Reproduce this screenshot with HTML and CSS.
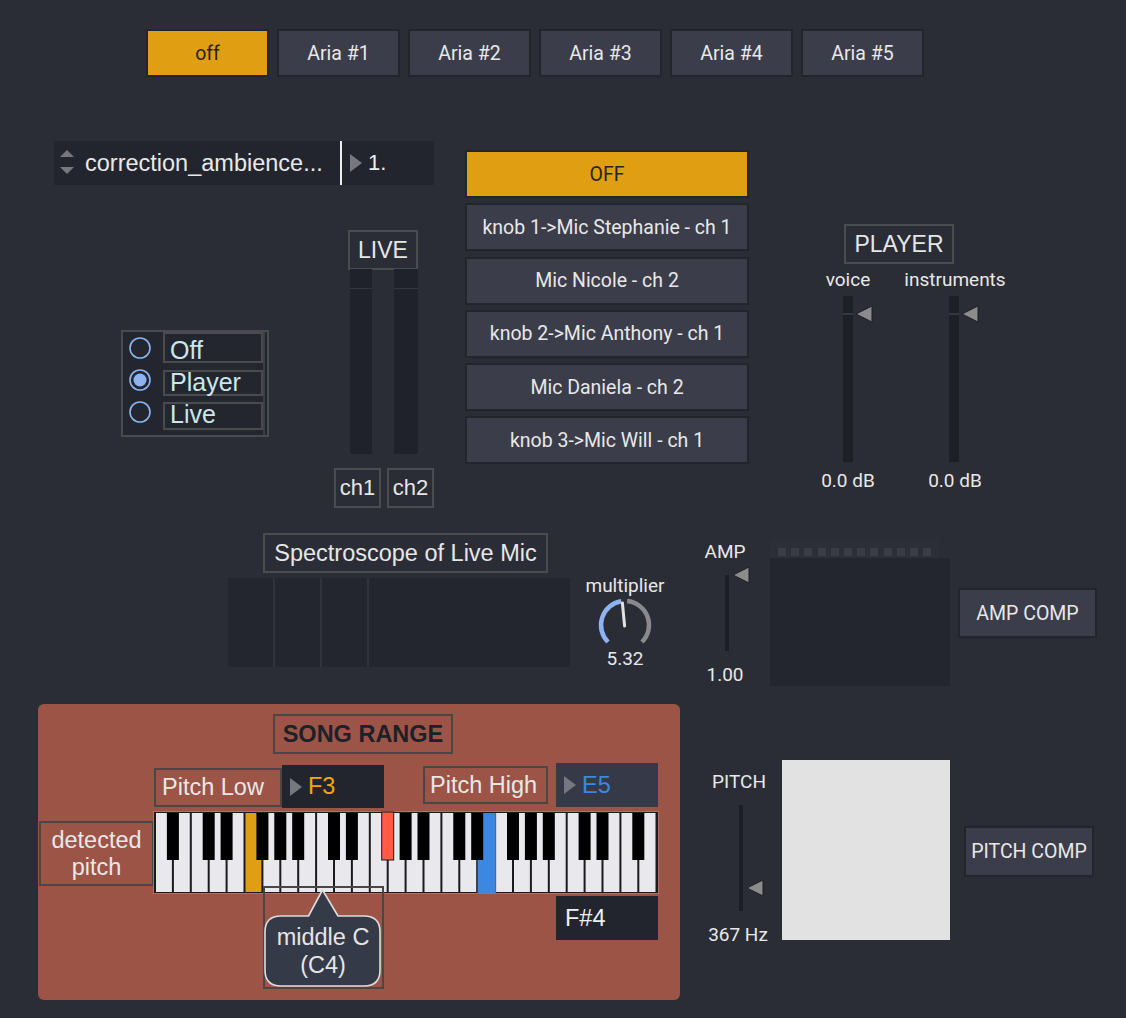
FILE: index.html
```html
<!DOCTYPE html>
<html>
<head>
<meta charset="utf-8">
<link rel="stylesheet" href="styles.css">
</head>
<body>
<div class="canvas">

  <div class="tabs">
    <div class="tab on">off</div>
    <div class="tab">Aria #1</div>
    <div class="tab">Aria #2</div>
    <div class="tab">Aria #3</div>
    <div class="tab">Aria #4</div>
    <div class="tab">Aria #5</div>
  </div>

  <div class="umenu">
    <svg class="updown" width="16" height="30" viewBox="0 0 16 30">
      <polygon points="1,9 8,2 15,9" fill="#77787d"/>
      <polygon points="1,19 15,19 8,26" fill="#77787d"/>
    </svg>
    <span class="umenu-text">correction_ambience...</span>
    <div class="numbox">
      <svg width="12" height="18" viewBox="0 0 12 18"><polygon points="0,0 12,9 0,18" fill="#77787d"/></svg>
      <span>1.</span>
    </div>
  </div>

  <div class="radio">
    <div class="radio-dots">
      <svg width="40" height="32"><circle cx="17" cy="16" r="10" fill="none" stroke="#8db4f0" stroke-width="1.6"/></svg>
      <svg width="40" height="32"><circle cx="17" cy="16" r="10" fill="none" stroke="#8db4f0" stroke-width="1.6"/><circle cx="17" cy="16" r="6.5" fill="#8db4f0"/></svg>
      <svg width="40" height="32"><circle cx="17" cy="16" r="10" fill="none" stroke="#8db4f0" stroke-width="1.6"/></svg>
    </div>
    <div class="radio-labels">
      <div class="rl rl-off"><span>Off</span></div>
      <div class="rl rl-player"><span>Player</span></div>
      <div class="rl rl-live"><span>Live</span></div>
    </div>
  </div>

  <div class="cmt live-title">LIVE</div>
  <div class="meter meter-l"></div>
  <div class="meter meter-r"></div>
  <div class="cmt ch ch1">ch1</div>
  <div class="cmt ch ch2">ch2</div>

  <div class="btnlist">
    <div class="btn on">OFF</div>
    <div class="btn">knob 1-&gt;Mic Stephanie - ch 1</div>
    <div class="btn">Mic Nicole - ch 2</div>
    <div class="btn">knob 2-&gt;Mic Anthony - ch 1</div>
    <div class="btn">Mic Daniela - ch 2</div>
    <div class="btn">knob 3-&gt;Mic Will - ch 1</div>
  </div>

  <div class="cmt player-title">PLAYER</div>
  <div class="lbl voice-lbl">voice</div>
  <div class="lbl instr-lbl">instruments</div>
  <div class="vslider vs-voice">
    <div class="vtrack"></div>
    <svg class="vthumb" width="20" height="20" viewBox="0 0 20 20"><polygon points="18,2 2,10 18,18" fill="#8c8c8c" stroke="#1c1e24" stroke-width="1"/></svg>
  </div>
  <div class="vslider vs-instr">
    <div class="vtrack"></div>
    <svg class="vthumb" width="20" height="20" viewBox="0 0 20 20"><polygon points="18,2 2,10 18,18" fill="#8c8c8c" stroke="#1c1e24" stroke-width="1"/></svg>
  </div>
  <div class="lbl db-voice">0.0 dB</div>
  <div class="lbl db-instr">0.0 dB</div>

  <div class="cmt spec-title">Spectroscope of Live Mic</div>
  <div class="spectro">
    <div class="sp-col"></div>
    <div class="sp-col"></div>
    <div class="sp-col"></div>
    <div class="sp-rest"></div>
  </div>
  <div class="lbl mult-lbl">multiplier</div>
  <svg class="knob" width="56" height="56" viewBox="0 0 56 56">
    <path d="M 11.03 44.97 A 24 24 0 0 1 24.25 4.3" fill="none" stroke="#8db4f0" stroke-width="4.5"/>
    <path d="M 30.1 4.1 A 24 24 0 0 1 44.97 44.97" fill="none" stroke="#8a8a8c" stroke-width="4.5"/>
    <line x1="27.6" y1="29" x2="25.4" y2="6" stroke="#e2e2e2" stroke-width="3" stroke-linecap="round"/>
  </svg>
  <div class="lbl mult-val">5.32</div>

  <div class="lbl amp-lbl">AMP</div>
  <div class="thin-track amp-track"></div>
  <svg class="amp-thumb" width="20" height="20" viewBox="0 0 20 20"><polygon points="18,2 2,10 18,18" fill="#8c8c8c" stroke="#1c1e24" stroke-width="1"/></svg>
  <div class="lbl amp-val">1.00</div>
  <div class="ampmeter-top">
    <i></i><i></i><i></i><i></i><i></i><i></i><i></i><i></i><i></i><i></i><i></i><i></i>
  </div>
  <div class="ampmeter"></div>
  <div class="btn comp amp-comp">AMP COMP</div>

  <div class="panel">
    <div class="pcmt song-title">SONG RANGE</div>
    <div class="pcmt plow">Pitch Low</div>
    <div class="notebox f3">
      <svg width="12" height="18" viewBox="0 0 12 18"><polygon points="0,0 12,9 0,18" fill="#77787d"/></svg>
      <span>F3</span>
    </div>
    <div class="pcmt phigh">Pitch High</div>
    <div class="notebox e5">
      <svg width="12" height="18" viewBox="0 0 12 18"><polygon points="0,0 12,9 0,18" fill="#77787d"/></svg>
      <span>E5</span>
    </div>
    <div class="pcmt detected">detected<br>pitch</div>

    <svg class="keyboard" width="506" height="84" viewBox="0 0 506 84">
      <rect x="0" y="0" width="506" height="83" fill="#1b1b1d"/>
      <rect x="0.5" y="0.5" width="505" height="82" fill="none" stroke="#b4705f" stroke-width="1"/>
      <g fill="#e8e8ed">
        <rect x="3" y="2" width="15.9" height="79"/>
        <rect x="20.9" y="2" width="15.9" height="79"/>
        <rect x="38.8" y="2" width="15.9" height="79"/>
        <rect x="56.7" y="2" width="15.9" height="79"/>
        <rect x="74.6" y="2" width="15.9" height="79"/>
        <rect x="92.5" y="2" width="15.9" height="79" fill="#e09e12"/>
        <rect x="110.4" y="2" width="15.9" height="79"/>
        <rect x="128.3" y="2" width="15.9" height="79"/>
        <rect x="146.2" y="2" width="15.9" height="79"/>
        <rect x="164.1" y="2" width="15.9" height="79"/>
        <rect x="182" y="2" width="15.9" height="79"/>
        <rect x="199.9" y="2" width="15.9" height="79"/>
        <rect x="217.8" y="2" width="15.9" height="79"/>
        <rect x="235.7" y="2" width="15.9" height="79"/>
        <rect x="253.6" y="2" width="15.9" height="79"/>
        <rect x="271.5" y="2" width="15.9" height="79"/>
        <rect x="289.4" y="2" width="15.9" height="79"/>
        <rect x="307.3" y="2" width="15.9" height="79"/>
        <rect x="324.6" y="2" width="18.2" height="80.5" fill="#3c87e0"/>
        <rect x="343.1" y="2" width="15.9" height="79"/>
        <rect x="361" y="2" width="15.9" height="79"/>
        <rect x="378.9" y="2" width="15.9" height="79"/>
        <rect x="396.8" y="2" width="15.9" height="79"/>
        <rect x="414.7" y="2" width="15.9" height="79"/>
        <rect x="432.6" y="2" width="15.9" height="79"/>
        <rect x="450.5" y="2" width="15.9" height="79"/>
        <rect x="468.4" y="2" width="15.9" height="79"/>
        <rect x="486.3" y="2" width="16.2" height="79"/>
      </g>
      <g fill="#000">
        <rect x="13.9" y="2" width="12" height="47"/>
        <rect x="49.7" y="2" width="12" height="47"/>
        <rect x="67.6" y="2" width="12" height="47"/>
        <rect x="103.4" y="2" width="12" height="47"/>
        <rect x="121.3" y="2" width="12" height="47"/>
        <rect x="139.2" y="2" width="12" height="47"/>
        <rect x="175" y="2" width="12" height="47"/>
        <rect x="192.9" y="2" width="12" height="47"/>
        <rect x="228.7" y="1" width="12" height="48" fill="#ff5b45" stroke="#1b1b1d" stroke-width="1"/>
        <rect x="246.6" y="2" width="12" height="47"/>
        <rect x="264.5" y="2" width="12" height="47"/>
        <rect x="300.3" y="2" width="12" height="47"/>
        <rect x="318.2" y="2" width="12" height="47"/>
        <rect x="354" y="2" width="12" height="47"/>
        <rect x="371.9" y="2" width="12" height="47"/>
        <rect x="389.8" y="2" width="12" height="47"/>
        <rect x="425.6" y="2" width="12" height="47"/>
        <rect x="443.5" y="2" width="12" height="47"/>
        <rect x="479.3" y="2" width="12" height="47"/>
      </g>
    </svg>

    <div class="callout">
      <svg class="bubble" width="120" height="102" viewBox="0 0 120 102">
        <path d="M 18 30 L 45.5 30 L 59.5 4 L 75 30 L 101 30 Q 117 30 117 46 L 117 84 Q 117 100 101 100 L 18 100 Q 2 100 2 84 L 2 46 Q 2 30 18 30 Z" fill="#353a48" stroke="#dcdcdc" stroke-width="1.6" stroke-linejoin="round"/>
      </svg>
      <div class="bubble-text">middle C<br>(C4)</div>
    </div>

    <div class="notebox fs4"><span>F#4</span></div>
  </div>

  <div class="lbl pitch-lbl">PITCH</div>
  <div class="thin-track pitch-track"></div>
  <svg class="pitch-thumb" width="20" height="20" viewBox="0 0 20 20"><polygon points="18,2 2,10 18,18" fill="#8c8c8c" stroke="#1c1e24" stroke-width="1"/></svg>
  <div class="lbl pitch-val">367 Hz</div>
  <div class="pitchbox"></div>
  <div class="btn comp pitch-comp">PITCH COMP</div>

</div>
</body>
</html>
```

FILE: styles.css
```css
html, body {
  margin: 0;
  padding: 0;
  background: #2b2d36;
}

.canvas {
  position: relative;
  width: 1126px;
  height: 1018px;
  overflow: hidden;
  background: #2b2d36;
  font-family: "Liberation Sans", Arial, sans-serif;
  color: #e6e6e6;
}

.canvas > * {
  position: absolute;
  box-sizing: border-box;
}

/* ---------- tabs ---------- */
.tabs {
  left: 146px;
  top: 29px;
  display: flex;
  gap: 8px;
}
.tab {
  width: 123px;
  height: 48px;
  box-sizing: border-box;
  border: 2px solid #23252d;
  background: #3b3d4a;
  color: #e8e8e8;
  font-family: Roboto, "Liberation Sans", sans-serif;
  font-size: 19.5px;
  display: flex;
  align-items: center;
  justify-content: center;
}
.tab.on {
  background: #e09e12;
  color: #26241f;
}

/* ---------- umenu ---------- */
.umenu {
  left: 54px;
  top: 141px;
  width: 380px;
  height: 44px;
  background: #22252e;
  display: flex;
  align-items: center;
}
.updown {
  margin-left: 5px;
  flex: none;
}
.umenu-text {
  margin-left: 10px;
  width: 255px;
  flex: none;
  font-size: 23.5px;
  color: #e8e8e8;
  white-space: nowrap;
}
.numbox {
  align-self: stretch;
  border-left: 2px solid #ececec;
  display: flex;
  align-items: center;
  gap: 6px;
  padding-left: 8px;
  font-size: 22px;
  color: #ececec;
}

/* ---------- radio ---------- */
.radio {
  left: 121px;
  top: 330px;
  width: 148px;
  height: 107px;
  border: 2px solid #4a4b50;
  background: #23262f;
  display: flex;
}
.radio-dots {
  width: 40px;
  display: flex;
  flex-direction: column;
}
.radio-dots svg {
  display: block;
}
.radio-labels {
  width: 100px;
  display: flex;
  flex-direction: column;
  border-right: 2px solid #3e3f44;
}
.rl {
  box-sizing: border-box;
  border: 2px solid #4b4b4e;
  padding-left: 5px;
  font-size: 25px;
  line-height: 25px;
  color: #cbe6ec;
  overflow: visible;
  white-space: nowrap;
}
.rl span {
  display: block;
}
.rl-off {
  height: 31px;
}
.rl-off span {
  margin-top: 4px;
}
.rl-player {
  height: 26px;
  margin-top: 7px;
}
.rl-player span {
  margin-top: -2px;
}
.rl-live {
  height: 28px;
  margin-top: 6px;
}
.rl-live span {
  margin-top: -2px;
}

/* ---------- comments with border ---------- */
.cmt {
  border: 2px solid #4b4c50;
  font-size: 23px;
  color: #e6e6e6;
  display: flex;
  align-items: center;
  justify-content: center;
  white-space: nowrap;
}
.live-title {
  left: 348px;
  top: 230px;
  width: 70px;
  height: 40px;
}
.meter {
  top: 269px;
  height: 185px;
  background: #1f222a;
  border-top: 19px solid #1f222a;
  box-shadow: inset 0 1px 0 #343740;
}
.meter-l {
  left: 350px;
  width: 22px;
}
.meter-r {
  left: 394px;
  width: 24px;
}
.ch {
  top: 468px;
  width: 47px;
  height: 40px;
  font-size: 22px;
}
.ch1 {
  left: 334px;
}
.ch2 {
  left: 387px;
}

/* ---------- buttons ---------- */
.btnlist {
  left: 465px;
  top: 150px;
  width: 284px;
  display: flex;
  flex-direction: column;
  gap: 5.25px;
}
.btn {
  height: 48px;
  box-sizing: border-box;
  border: 2px solid #23252d;
  background: #3b3d4a;
  color: #e8e8e8;
  font-family: Roboto, "Liberation Sans", sans-serif;
  font-size: 19.5px;
  display: flex;
  align-items: center;
  justify-content: center;
  white-space: nowrap;
}
.btn.on {
  background: #e09e12;
  color: #26241f;
}

/* ---------- player ---------- */
.player-title {
  left: 844px;
  top: 224px;
  width: 110px;
  height: 40px;
}
.lbl {
  font-family: Roboto, "Liberation Sans", sans-serif;
  font-size: 19px;
  color: #e8e8e8;
  white-space: nowrap;
  text-align: center;
  line-height: 22px;
}
.voice-lbl {
  left: 808px;
  width: 80px;
  top: 269px;
}
.instr-lbl {
  left: 895px;
  width: 120px;
  top: 269px;
}
.vslider {
  top: 296px;
  width: 32px;
  height: 166px;
}
.vs-voice {
  left: 843px;
}
.vs-instr {
  left: 949px;
}
.vtrack {
  position: absolute;
  left: 0;
  top: 0;
  width: 10px;
  height: 166px;
  background: #1e2028;
}
.vtrack::after {
  content: "";
  position: absolute;
  left: 0;
  top: 17px;
  width: 10px;
  height: 2px;
  background: #363944;
}
.vthumb {
  position: absolute;
  left: 11px;
  top: 8px;
}
.db-voice {
  left: 808px;
  width: 80px;
  top: 470px;
}
.db-instr {
  left: 915px;
  width: 80px;
  top: 470px;
}

/* ---------- spectroscope ---------- */
.spec-title {
  left: 263px;
  top: 533px;
  width: 285px;
  height: 40px;
  font-size: 23.5px;
}
.spectro {
  left: 228px;
  top: 578px;
  width: 342px;
  height: 89px;
  display: flex;
  background: #23262f;
}
.sp-col {
  width: 45px;
  border-right: 2px solid #30333c;
}
.sp-rest {
  flex: 1;
}
.mult-lbl {
  left: 575px;
  width: 100px;
  top: 575px;
}
.knob {
  left: 597px;
  top: 597px;
}
.mult-val {
  left: 585px;
  width: 80px;
  top: 648px;
}

/* ---------- amp ---------- */
.amp-lbl {
  left: 700px;
  width: 50px;
  top: 541px;
}
.thin-track {
  width: 4px;
  background: #1c1e26;
}
.amp-track {
  left: 725px;
  top: 575px;
  height: 76px;
}
.amp-thumb {
  left: 731px;
  top: 565px;
}
.amp-val {
  left: 700px;
  width: 50px;
  top: 664px;
}
.ampmeter-top {
  left: 770px;
  top: 540px;
  width: 168px;
  height: 20px;
  background: #2d2f38;
  display: flex;
  gap: 5.2px;
  padding: 8px 0 0 8px;
}
.ampmeter-top i {
  display: block;
  width: 8px;
  height: 8px;
  background: #3a3c46;
}
.ampmeter {
  left: 770px;
  top: 558px;
  width: 180px;
  height: 128px;
  background: #23262f;
}
.amp-comp {
  left: 958px;
  top: 588px;
  width: 139px;
  height: 50px;
}

/* ---------- song range panel ---------- */
.panel {
  left: 38px;
  top: 704px;
  width: 642px;
  height: 296px;
  background: #9c5446;
  border-radius: 6px;
}
.panel > * {
  position: absolute;
  box-sizing: border-box;
}
.pcmt {
  border: 2px solid #4b4545;
  font-size: 23.5px;
  color: #e8e8e8;
  white-space: nowrap;
  display: flex;
  align-items: center;
}
.song-title {
  left: 235px;
  top: 10px;
  width: 180px;
  height: 40px;
  justify-content: center;
  font-weight: bold;
  color: #1d2029;
}
.plow {
  left: 116px;
  top: 64px;
  width: 128px;
  height: 39px;
  padding-left: 6px;
}
.phigh {
  left: 385px;
  top: 62px;
  width: 125px;
  height: 38px;
  padding-left: 5px;
}
.notebox {
  display: flex;
  align-items: center;
  gap: 6px;
  padding-left: 8px;
  font-size: 23.5px;
  background: #22252e;
}
.f3 {
  left: 244px;
  top: 61px;
  width: 102px;
  height: 43px;
  color: #f2a800;
}
.e5 {
  left: 518px;
  top: 59px;
  width: 102px;
  height: 44px;
  background: #363a48;
  color: #3c87e0;
}
.fs4 {
  left: 518px;
  top: 192px;
  width: 102px;
  height: 44px;
  color: #f0f0f0;
  padding-left: 9px;
}
.detected {
  left: 1px;
  top: 117px;
  width: 115px;
  height: 65px;
  justify-content: center;
  text-align: center;
  line-height: 27px;
}
.keyboard {
  left: 115px;
  top: 107px;
}
.callout {
  left: 225px;
  top: 182px;
  width: 121px;
  height: 103px;
  border: 2px solid #4b4545;
}
.bubble {
  position: absolute;
  left: -2px;
  top: -2px;
}
.bubble-text {
  position: absolute;
  left: -2px;
  top: 35px;
  width: 120px;
  text-align: center;
  font-size: 23.5px;
  line-height: 28px;
  color: #e6e6e6;
}

/* ---------- pitch ---------- */
.pitch-lbl {
  left: 706px;
  width: 66px;
  top: 771px;
}
.pitch-track {
  left: 739px;
  top: 805px;
  height: 106px;
}
.pitch-thumb {
  left: 745px;
  top: 878px;
}
.pitch-val {
  left: 700px;
  width: 76px;
  top: 924px;
}
.pitchbox {
  left: 782px;
  top: 760px;
  width: 168px;
  height: 180px;
  background: #e2e2e2;
}
.pitch-comp {
  left: 964px;
  top: 826px;
  width: 130px;
  height: 51px;
}
```
